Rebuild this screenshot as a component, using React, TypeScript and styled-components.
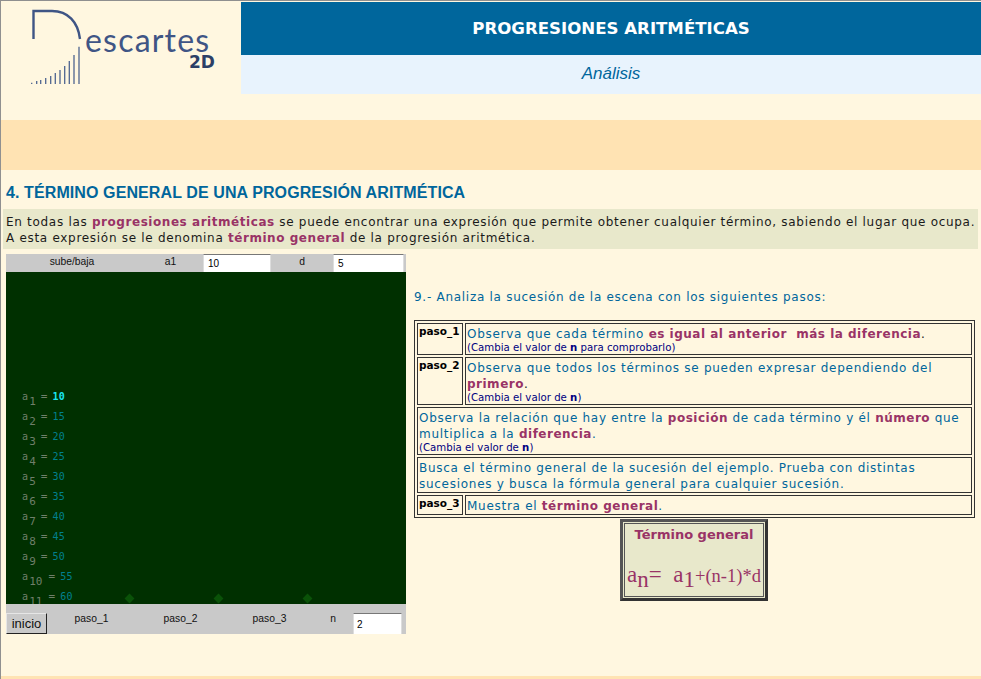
import styled, { createGlobalStyle } from "styled-components";

const terms = [10, 15, 20, 25, 30, 35, 40, 45, 50, 55, 60];

const GlobalStyle = createGlobalStyle`
	html, body {
		margin: 0;
		padding: 0;
		background: #fff7e0;
	}
	body {
		width: 981px;
		height: 679px;
		overflow: hidden;
		font-family: "DejaVu Sans", Verdana, sans-serif;
	}
`;

const App = () => {
	return (
		<>
			<GlobalStyle />
			<Page>
				<Header>
					<LogoArea>
						<LogoArt width="60" height="86" viewBox="0 0 60 86">
							<path d="M3.500 37 V9 H22 C38 9 48 20 50 37" fill="none" stroke="#3f5585" strokeWidth="2.400" />
							<path d="M1.700 82V80.700M6.700 82V79M10.700 82V78M15.700 82V76M20.700 82V74M25.300 82V71M30 82V68M34.700 82V64M39.300 82V59M44 82V53M49 82V44.700" fill="none" stroke="#4f6590" strokeWidth="1.300" />
						</LogoArt>
						<LogoWord>escartes</LogoWord>
						<LogoBadge>2D</LogoBadge>
					</LogoArea>
					<HeaderTitles>
						<MainTitle>PROGRESIONES ARITMÉTICAS</MainTitle>
						<SubTitle>Análisis</SubTitle>
					</HeaderTitles>
				</Header>

				<PeachBand />

				<SectionTitle>4. TÉRMINO GENERAL DE UNA PROGRESIÓN ARITMÉTICA</SectionTitle>

				<Intro>
					En todas las <Strong>progresiones aritméticas</Strong> se puede encontrar una expresión que permite obtener cualquier término, sabiendo el lugar que ocupa.
					<br />
					A esta expresión se le denomina <Strong>término general</Strong> de la progresión aritmética.
				</Intro>

				<Columns>
					<Scene>
						<SceneTop>
							<SceneLabel $width={132}>sube/baja</SceneLabel>
							<SceneLabel $width={65}>a1</SceneLabel>
							<SceneInput $width={68} readOnly value="10" />
							<SceneLabel $width={62}>d</SceneLabel>
							<SceneInput $width={71} readOnly value="5" />
						</SceneTop>
						<Canvas>
							{terms.map((value, index) => (
								<TermRow key={value}>
									a<TermIndex>{index + 1}</TermIndex>
									<TermEquals $wide={index > 8}>=</TermEquals>
									<TermValue $active={index === 0}>{value}</TermValue>
								</TermRow>
							))}
							<Marker $left={120} />
							<Marker $left={209} />
							<Marker $left={298} />
						</Canvas>
						<SceneBottom>
							<ResetButton>inicio</ResetButton>
							<BottomLabel $width={89}>paso_1</BottomLabel>
							<BottomLabel $width={89}>paso_2</BottomLabel>
							<BottomLabel $width={89}>paso_3</BottomLabel>
							<BottomLabel $width={38}>n</BottomLabel>
							<BottomInput readOnly value="2" />
						</SceneBottom>
					</Scene>

					<RightColumn>
						<Question>9.- Analiza la sucesión de la escena con los siguientes pasos:</Question>
						<Steps>
							<tbody>
								<tr>
									<StepName>paso_1</StepName>
									<StepCell>
										Observa que cada término <StepStrong>es igual al anterior &nbsp;más la diferencia</StepStrong><Dark>.</Dark>
										<Hint>(Cambia el valor de <b>n</b> para comprobarlo)</Hint>
									</StepCell>
								</tr>
								<tr>
									<StepName>paso_2</StepName>
									<StepCell>
										Observa que todos los términos se pueden expresar dependiendo del <StepStrong>primero</StepStrong><Dark>.</Dark>
										<Hint>(Cambia el valor de <b>n</b>)</Hint>
									</StepCell>
								</tr>
								<tr>
									<StepCell colSpan={2}>
										Observa la relación que hay entre la <StepStrong>posición</StepStrong> de cada término y él <StepStrong>número</StepStrong> que multiplica a la <StepStrong>diferencia</StepStrong>.
										<Hint>(Cambia el valor de <b>n</b>)</Hint>
									</StepCell>
								</tr>
								<tr>
									<StepCell colSpan={2}>
										Busca el término general de la sucesión del ejemplo. Prueba con distintas sucesiones y busca la fórmula general para cualquier sucesión.
									</StepCell>
								</tr>
								<tr>
									<StepName>paso_3</StepName>
									<StepCell>
										Muestra el <StepStrong>término general</StepStrong>.
									</StepCell>
								</tr>
							</tbody>
						</Steps>
						<FormulaBox>
							<FormulaTitle>Término general</FormulaTitle>
							<Formula>
								a<FormulaSub>n</FormulaSub>=&nbsp; a<FormulaSub>1</FormulaSub><FormulaRest>+(n-1)*d</FormulaRest>
							</Formula>
						</FormulaBox>
					</RightColumn>
				</Columns>
				<BottomLine />
			</Page>
		</>
	);
};

const Page = styled.div`
	position: relative;
	box-sizing: border-box;
	width: 981px;
	height: 679px;
	overflow: hidden;
	padding-top: 1px;
	border-left: 1px solid #909090;
	border-top: 1px solid #8f8f8f;
	background: #fff7e0;
`;

const Header = styled.header`
	display: flex;
	height: 92px;
`;

const LogoArea = styled.div`
	position: relative;
	display: flex;
	width: 240px;
	flex: none;
`;

const LogoArt = styled.svg`
	position: absolute;
	left: 29px;
	top: 0;
`;

const LogoWord = styled.span`
	position: absolute;
	left: 84px;
	top: 18px;
	font-family: "Lato", sans-serif;
	font-size: 32px;
	letter-spacing: 1.2px;
	color: #3f5585;
`;

const LogoBadge = styled.span`
	position: absolute;
	left: 188px;
	top: 50px;
	font-size: 17px;
	font-weight: 700;
	color: #2c3f66;
`;

const HeaderTitles = styled.div`
	flex: 1;
	display: flex;
	flex-direction: column;
`;

const MainTitle = styled.h1`
	margin: 0;
	height: 53px;
	line-height: 54px;
	text-align: center;
	font-size: 16.6px;
	font-weight: 700;
	color: #fff;
	background: #00669c;
`;

const SubTitle = styled.div`
	height: 39px;
	line-height: 38px;
	text-align: center;
	font-family: "Liberation Sans", Arial, sans-serif;
	font-size: 17px;
	font-style: italic;
	color: #00669c;
	background: #e8f3fd;
`;

const PeachBand = styled.div`
	height: 50px;
	margin: 26px 0 0 0;
	background: #ffe3b3;
`;

const SectionTitle = styled.h2`
	margin: 13px 0 0 5px;
	height: 26px;
	font-family: "Liberation Sans", Arial, sans-serif;
	font-size: 16px;
	line-height: 19px;
	letter-spacing: 0.1px;
	font-weight: 700;
	color: #00669c;
`;

const Intro = styled.p`
	margin: 0 2px;
	padding: 5px 3px 0;
	height: 40px;
	box-sizing: border-box;
	width: 975px;
	font-size: 12px;
	line-height: 16px;
	letter-spacing: 0.7px;
	white-space: nowrap;
	color: #1a1a1a;
	background: #e8e8cb;
`;

const Strong = styled.strong`
	font-weight: 700;
	letter-spacing: 0.55px;
	color: #993366;
`;

const StepStrong = styled(Strong)`
	letter-spacing: 0.5px;
`;

const Dark = styled.span`
	color: #1a1a1a;
`;

const Columns = styled.main`
	display: flex;
	margin: 5px 0 0 5px;
	gap: 8px;
`;

const Scene = styled.section`
	display: flex;
	flex-direction: column;
	width: 400px;
	flex: none;
`;

const SceneTop = styled.div`
	display: flex;
	align-items: flex-start;
	height: 18px;
	background: #c9c9c9;
`;

const SceneBottom = styled.div`
	display: flex;
	align-items: flex-start;
	height: 30px;
	background: #c9c9c9;
`;

const SceneLabel = styled.span<{ $width: number }>`
	flex: none;
	width: ${(props) => props.$width}px;
	padding-top: 2px;
	text-align: center;
	font-family: "Liberation Sans", Arial, sans-serif;
	font-size: 10.3px;
	line-height: 12px;
	color: #111;
`;

const BottomLabel = styled(SceneLabel)`
	padding-top: 9px;
`;

const SceneInput = styled.input<{ $width: number }>`
	flex: none;
	box-sizing: border-box;
	width: ${(props) => props.$width}px;
	height: 18px;
	padding: 0 0 0 4px;
	border: 0;
	border-top: 1px solid #777;
	border-left: 1px solid #ddd;
	border-right: 1px solid #ddd;
	outline: 0;
	font-family: "Liberation Sans", Arial, sans-serif;
	font-size: 10px;
	background: #fff;
	color: #000;
`;

const BottomInput = styled.input`
	flex: none;
	box-sizing: border-box;
	width: 49px;
	height: 21px;
	margin: 9px 0 0 1px;
	padding: 1px 0 0 3px;
	border: 0;
	border-top: 1px solid #777;
	border-left: 1px solid #ddd;
	border-right: 1px solid #ddd;
	outline: 0;
	font-family: "Liberation Sans", Arial, sans-serif;
	font-size: 10px;
	background: #fff;
	color: #000;
`;

const ResetButton = styled.button`
	flex: none;
	box-sizing: border-box;
	width: 41px;
	height: 21px;
	margin-top: 9px;
	padding: 0;
	border: 1px solid;
	border-color: #e6e6e6 #222 #222 #e6e6e6;
	font-family: "Liberation Sans", Arial, sans-serif;
	font-size: 13px;
	color: #111;
	background: #c9c9c9;
`;

const Canvas = styled.div`
	position: relative;
	display: flex;
	flex-direction: column;
	height: 332px;
	box-sizing: border-box;
	padding: 115px 0 0 16px;
	overflow: hidden;
	background: #003000;
`;

const TermRow = styled.div`
	flex: none;
	height: 20px;
	font-family: "DejaVu Sans Mono", monospace;
	font-size: 10px;
	line-height: 20px;
	letter-spacing: 0.1px;
	white-space: nowrap;
	color: #6f7f6a;
`;

const TermIndex = styled.sub`
	font-size: 11px;
	line-height: 0;
	vertical-align: -5px;
	margin-left: 1px;
`;

const TermEquals = styled.span<{ $wide: boolean }>`
	margin: 0 5px 0 ${(props) => (props.$wide ? 6 : 5)}px;
	font-size: 11px;
`;

const TermValue = styled.span<{ $active: boolean }>`
	font-weight: ${(props) => (props.$active ? 700 : 400)};
	color: ${(props) => (props.$active ? "#19e6f0" : "#00808f")};
`;

const Marker = styled.i<{ $left: number }>`
	position: absolute;
	left: ${(props) => props.$left}px;
	top: 323px;
	width: 7px;
	height: 7px;
	transform: rotate(45deg);
	background: #0a5208;
`;

const RightColumn = styled.section`
	flex: 1;
	min-width: 0;
	padding-right: 5px;
`;

const Question = styled.p`
	margin: 36px 0 0 0;
	height: 30px;
	font-size: 12px;
	line-height: 14px;
	letter-spacing: 0.72px;
	color: #00669c;
`;

const Steps = styled.table`
	box-sizing: border-box;
	width: 561px;
	border: 1px solid #333;
	border-spacing: 2px;
	border-collapse: separate;
`;

const StepName = styled.td`
	width: 42px;
	padding: 0 1px;
	border: 1px solid #333;
	vertical-align: top;
	font-size: 10.5px;
	font-weight: 700;
	line-height: 14px;
	white-space: nowrap;
	color: #000;
`;

const StepCell = styled.td`
	padding: 2px 1px 0;
	border: 1px solid #333;
	vertical-align: top;
	font-size: 12px;
	line-height: 16px;
	letter-spacing: 0.72px;
	color: #00669c;
`;

const Hint = styled.small`
	display: block;
	font-size: 10.2px;
	line-height: 12px;
	letter-spacing: 0;
	color: #000080;
	b {
		color: #000080;
	}
`;

const FormulaBox = styled.aside`
	box-sizing: border-box;
	width: 148px;
	height: 82px;
	margin: 1px 0 0 206px;
	padding: 5px 0 0;
	border: 3px solid #333;
	border-top-color: #555;
	border-left-color: #555;
	box-shadow: inset 0 0 0 1px #e8e8cb, inset 0 0 0 2px #555;
	text-align: center;
	background: #e8e8cb;
`;

const FormulaTitle = styled.div`
	font-size: 13px;
	font-weight: 700;
	line-height: 16px;
	color: #993366;
`;

const Formula = styled.div`
	margin-top: 20px;
	font-family: "Liberation Serif", "Times New Roman", serif;
	font-size: 23px;
	line-height: 24px;
	white-space: nowrap;
	color: #993366;
`;

const FormulaSub = styled.sub`
	font-size: 23px;
	line-height: 0;
	vertical-align: -5px;
`;

const FormulaRest = styled.span`
	font-size: 18.5px;
`;

const BottomLine = styled.div`
	position: absolute;
	left: 0;
	right: 0;
	bottom: 0;
	height: 3px;
	background: #ffe3b3;
`;

export default App;
